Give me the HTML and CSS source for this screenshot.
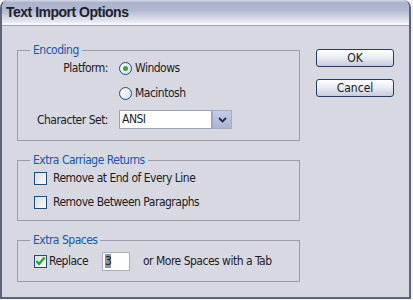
FILE: index.html
```html
<!DOCTYPE html>
<html lang="en">
<head>
  <meta charset="UTF-8">
  <title>Text Import Options</title>
  <link rel="stylesheet" href="styles.css">
</head>
<body>
  <div class="window">
    <div class="titlebar">Text Import Options</div>
    <div class="content">
      <div class="groups">
        <fieldset class="group encoding">
          <legend>Encoding</legend>
          <span class="label">Platform:</span>
          <span class="radio checked"><i class="dot"></i>Windows</span>
          <span></span>
          <span class="radio mac"><i class="dot"></i>Macintosh</span>
          <span class="label">Character Set:</span>
          <div class="select">
            <span class="value">ANSI</span>
            <span class="arrow">
              <svg width="9" height="6" viewBox="0 0 9 6"><path d="M1 1 L4.5 4.5 L8 1" fill="none" stroke="#1e2a44" stroke-width="1.8"/></svg>
            </span>
          </div>
        </fieldset>

        <fieldset class="group returns">
          <legend>Extra Carriage Returns</legend>
          <span class="check"><i class="box"></i>Remove at End of Every Line</span>
          <span class="check"><i class="box"></i>Remove Between Paragraphs</span>
        </fieldset>

        <fieldset class="group spaces">
          <legend>Extra Spaces</legend>
          <div class="replace-row">
            <span class="check checked"><i class="box">
              <svg width="11" height="10" viewBox="0 0 11 10"><path d="M1.5 5 L4 8 L9.5 1.5" fill="none" stroke="#2aa52a" stroke-width="2.2"/></svg>
            </i>Replace</span>
            <span class="num"><span class="sel">3</span></span>
            <span>or More Spaces with a Tab</span>
          </div>
        </fieldset>
      </div>

      <div class="buttons">
        <button class="btn">OK</button>
        <button class="btn">Cancel</button>
      </div>
    </div>
  </div>
</body>
</html>
```

FILE: styles.css
```css
body {
  margin: 0;
  background-color: #f2f2f6;
  font-family: 'DejaVu Sans Condensed', 'Liberation Sans', sans-serif;
  font-size: 12px;
  letter-spacing: -0.5px;
  color: #1c1c24;
}

.window {
  width: 407px;
  height: 297px;
  border: 2px solid #5c6478;
  border-top: none;
  border-radius: 8px 8px 0 0;
  background-color: #d8d8e2;
  overflow: hidden;
}

.titlebar {
  height: 23px;
  padding-left: 4px;
  line-height: 24px;
  font-family: 'Liberation Sans', Arial, sans-serif;
  font-size: 14px;
  font-weight: bold;
  letter-spacing: -0.5px;
  color: #20222c;
  background: linear-gradient(#d6d9e6 0, #aab1cb 12%, #b2b9d1 45%, #dcdfea 85%, #eceef4 100%);
  border-bottom: 2px solid #f6f7fa;
  box-shadow: 0 1px 0 #9ea3b4;
}

.content {
  display: flex;
  gap: 16px;
  padding: 17px 0 0 15px;
}

.groups {
  display: flex;
  flex-direction: column;
  gap: 11px;
  width: 283px;
}

.group {
  margin: 0;
  border: 1px solid #9c9ca8;
  min-width: 0;
}

.group legend {
  padding: 0 3px;
  margin-left: -4px;
  line-height: 16px;
  color: #1656ae;
}

.encoding {
  display: grid;
  grid-template-columns: 74px auto;
  grid-template-rows: 20px 22px 19px;
  column-gap: 11px;
  row-gap: 5px;
  align-items: center;
  padding: 0 0 11px 16px;
}

.encoding .label {
  justify-self: end;
}

.encoding .mac {
  align-self: start;
  height: 20px;
}

.radio {
  display: flex;
  align-items: center;
  gap: 3px;
}

.radio .dot {
  width: 11px;
  height: 11px;
  border: 1px solid #1d4f7c;
  border-radius: 50%;
  background: radial-gradient(circle at 40% 40%, #ffffff, #d4d6de);
  display: flex;
  align-items: center;
  justify-content: center;
}

.radio.checked .dot::after {
  content: "";
  width: 5px;
  height: 5px;
  border-radius: 50%;
  background-color: #2fa83a;
}

.select {
  display: flex;
  width: 113px;
  height: 19px;
}

.select .value {
  flex: 1;
  background-color: #ffffff;
  border: 1px solid #9aa4b8;
  padding-left: 2px;
  line-height: 17px;
}

.select .arrow {
  width: 18px;
  background: linear-gradient(#c4cde4, #a8b4d2);
  border: 1px solid #a2acc4;
  display: flex;
  align-items: center;
  justify-content: center;
}

.returns {
  display: flex;
  flex-direction: column;
  gap: 8px;
  padding: 2px 0 10px 16px;
}

.check {
  display: flex;
  align-items: center;
  gap: 6px;
  height: 16px;
}

.check .box {
  width: 11px;
  height: 11px;
  border: 1px solid #1d4f7c;
  background: linear-gradient(135deg, #dcdce2, #fafafc);
  display: flex;
  align-items: center;
  justify-content: center;
}

.check.checked {
  gap: 2px;
  width: 55px;
}

.spaces {
  padding: 3px 0 10px 16px;
}

.replace-row {
  display: flex;
  align-items: center;
  height: 20px;
}

.num {
  width: 24px;
  height: 17px;
  margin: 0 13px;
  background-color: #ffffff;
  border: 1px solid #a8aebc;
  padding-left: 2px;
  line-height: 17px;
}

.num .sel {
  background-color: #8c94a8;
  color: #20242c;
}

.buttons {
  display: flex;
  flex-direction: column;
  gap: 12px;
  padding-top: 7px;
}

.btn {
  width: 78px;
  height: 18px;
  padding: 0;
  font-family: inherit;
  font-size: 12px;
  letter-spacing: 0;
  color: #1c1c24;
  border: 1px solid #1f4064;
  border-radius: 3px;
  background: linear-gradient(#ffffff 0, #eef0f6 40%, #c6cbdc 100%);
}
```
